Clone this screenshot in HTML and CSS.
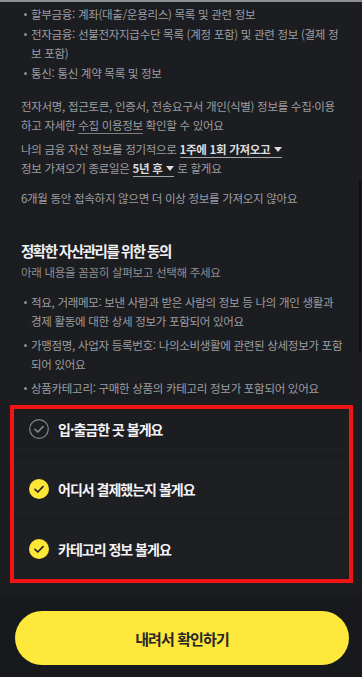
FILE: index.html
```html
<!DOCTYPE html>
<html lang="ko">
<head>
  <meta charset="UTF-8" />
  <meta name="viewport" content="width=device-width, initial-scale=1.0" />
  <title>자산관리 동의</title>
  <link rel="stylesheet" href="styles.css">
</head>
<body>

  <div class="page">
    <div class="content">
      <div class="info">
        <ul class="dot-list">
          <li>할부금융: 계좌(대출/운용리스) 목록 및 관련 정보</li>
          <li>전자금융: 선불전자지급수단 목록 (계정 포함) 및 관련 정보 (결제 정보 포함)</li>
          <li>통신: 통신 계약 목록 및 정보</li>
        </ul>

        <p class="para first">전자서명, 접근토큰, 인증서, 전송요구서 개인(식별) 정보를 수집·이용하고 자세한 <span class="link">수집 이용정보</span> 확인할 수 있어요</p>

        <p class="para">나의 금융 자산 정보를 정기적으로 <span class="select">1주에 1회 가져오고 <svg class="caret" viewBox="0 0 8 6"><path d="M0 0h8L4 5z"/></svg></span><br>정보 가져오기 종료일은 <span class="select">5년 후 <svg class="caret" viewBox="0 0 8 6"><path d="M0 0h8L4 5z"/></svg></span> 로 할게요</p>

        <p class="para notice">6개월 동안 접속하지 않으면 더 이상 정보를 가져오지 않아요</p>

        <h2 class="title">정확한 자산관리를 위한 동의</h2>
        <p class="sub">아래 내용을 꼼꼼히 살펴보고 선택해 주세요</p>

        <ul class="dot-list spaced">
          <li>적요, 거래메모: 보낸 사람과 받은 사람의 정보 등 나의 개인 생활과 경제 활동에 대한 상세 정보가 포함되어 있어요</li>
          <li>가맹점명, 사업자 등록번호: 나의소비생활에 관련된 상세정보가 포함되어 있어요</li>
          <li>상품카테고리: 구매한 상품의 카테고리 정보가 포함되어 있어요</li>
        </ul>
      </div>

      <div class="choices">
        <div class="choice top">
          <svg class="check off" viewBox="0 0 20 20"><circle cx="10" cy="10" r="9.3"/><path d="M6 10.3l2.8 2.7L14 7.6"/></svg>
          <span>입·출금한 곳 볼게요</span>
        </div>
        <div class="choice card">
          <svg class="check on" viewBox="0 0 20 20"><circle cx="10" cy="10" r="10"/><path d="M6 10.3l2.8 2.7L14 7.6"/></svg>
          <span>어디서 결제했는지 볼게요</span>
        </div>
        <div class="choice card">
          <svg class="check on" viewBox="0 0 20 20"><circle cx="10" cy="10" r="10"/><path d="M6 10.3l2.8 2.7L14 7.6"/></svg>
          <span>카테고리 정보 볼게요</span>
        </div>
      </div>

      <div class="scroll-thumb"></div>
    </div>

    <div class="footer">
      <button class="main-btn">내려서 확인하기</button>
    </div>
  </div>

</body>
</html>
```

FILE: styles.css
```css
* {
  box-sizing: border-box;
}

body {
  margin: 0;
  font-family: "Noto Sans CJK KR", "Noto Sans", sans-serif;
  background: #1c1d21;
}

.page {
  height: 677px;
  display: flex;
  flex-direction: column;
  border-top: 2px solid #8e8f93;
}

.content {
  position: relative;
  flex: 1;
  overflow: hidden;
  padding: 3px 9px 0 10px;
}

.info {
  padding: 0 9px 0 11px;
  color: #9c9da1;
  font-size: 11.5px;
  letter-spacing: -0.3px;
  line-height: 19px;
  word-break: break-all;
}

.dot-list {
  list-style: none;
  margin: 0;
  padding: 0 0 0 10px;
}

.dot-list li {
  position: relative;
  margin-bottom: 1px;
}

.dot-list li::before {
  content: "";
  position: absolute;
  left: -7px;
  top: 8px;
  width: 3px;
  height: 3px;
  border-radius: 50%;
  background: #8c8d91;
}

.dot-list.spaced li {
  margin-bottom: 5px;
}

.para {
  margin: 5px 0 0;
}

.para.first {
  margin-top: 14px;
}

.para.notice {
  margin-top: 11px;
}

.link {
  text-decoration: underline;
  text-underline-offset: 3px;
  text-decoration-color: #7d7e82;
}

.select {
  color: #dcdcde;
  font-weight: 700;
  border-bottom: 1px solid #a4a5a9;
}

.caret {
  width: 8px;
  height: 6px;
  fill: #dcdcde;
  vertical-align: 1px;
  margin-left: 1px;
}

.title {
  margin: 32px 0 0;
  color: #f1f1f3;
  font-size: 14.5px;
  font-weight: 700;
  letter-spacing: -1.5px;
  line-height: 22px;
}

.sub {
  margin: 1px 0 0;
  color: #8e8f93;
}

.title + .sub + .dot-list {
  margin-top: 11px;
}

.choices {
  margin-top: 7px;
  border: 4px solid #f01414;
  height: 178px;
  overflow: hidden;
}

.choice {
  display: flex;
  align-items: center;
  gap: 9px;
  padding: 0 15px;
  height: 60px;
  color: #f3f3f5;
  font-size: 14px;
  font-weight: 700;
  letter-spacing: -1px;
}

.choice.top {
  height: 40px;
  margin-bottom: 10px;
  border-bottom: 1px solid #202125;
}

.choice.card {
  background: #1e1f23;
  border-bottom: 1px solid #191a1d;
}

.check {
  width: 20px;
  height: 20px;
  flex-shrink: 0;
}

.check path {
  fill: none;
  stroke-width: 1.7;
  stroke-linecap: round;
  stroke-linejoin: round;
}

.check.on circle {
  fill: #fce636;
}

.check.on path {
  stroke: #26262a;
}

.check.off circle {
  fill: none;
  stroke: #85868a;
  stroke-width: 1.2;
}

.check.off path {
  stroke: #85868a;
}

.scroll-thumb {
  position: absolute;
  right: 1px;
  top: 178px;
  width: 2px;
  height: 172px;
  background: #0f1012;
  border-radius: 1px;
}

.footer {
  height: 80px;
  background: #18191c;
  padding: 14px 13px 12px 15px;
}

.main-btn {
  width: 100%;
  height: 54px;
  border: none;
  border-radius: 27px;
  background: #fde83b;
  color: #27272a;
  font-family: inherit;
  font-size: 15px;
  font-weight: 700;
  letter-spacing: -0.9px;
}
```
